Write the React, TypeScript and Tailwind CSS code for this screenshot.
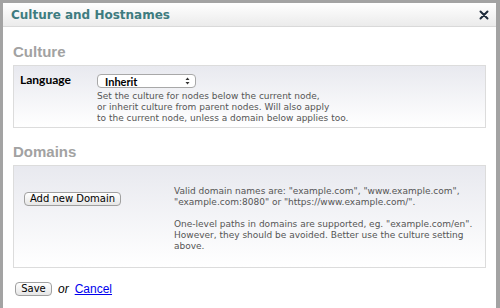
import React from "react";

const font = { fontFamily: '"DejaVu Sans", "Liberation Sans", sans-serif' };
const head = { fontFamily: '"Liberation Sans", Arial, sans-serif' };
const lato = { fontFamily: 'Lato, "Liberation Sans", sans-serif' };

export default function App() {
  return (
    <div className="w-[500px] h-[308px] bg-[#a3a3a3] pt-[3px] pl-[3px] pr-[4px] overflow-hidden" style={font}>
      <div className="h-full bg-white flex flex-col">
        <div className="h-[24px] flex items-center justify-between pl-[8px] pr-[7px] border-b border-[#d9d9d9] bg-gradient-to-b from-[#ffffff] to-[#ebebeb]">
          <span className="text-[12px] font-bold text-[#3e7c80]">Culture and Hostnames</span>
          <svg width="10" height="10" viewBox="0 0 10 10">
            <path d="M1.5 1.5 L8.5 8.5 M8.5 1.5 L1.5 8.5" stroke="#1d2a3a" strokeWidth="2" strokeLinecap="round" />
          </svg>
        </div>
        <div className="px-[10px] flex flex-col">
          <div className="mt-[15px] h-[20px] flex items-center text-[15px] font-bold text-[#a2a2a2]" style={head}>Culture</div>
          <div className="mt-[3px] border border-[#dcdcdc] bg-gradient-to-b from-[#e8e9ef] to-[#ffffff] flex h-[63px]">
            <div className="w-[83px] pl-[6px] pt-[5px] text-[12px] font-bold text-black" style={lato}>Language</div>
            <div className="flex flex-col pt-[8px]">
              <div className="w-[99px] h-[14px] rounded-[4px] border border-[#a8a8a8] bg-white flex items-center justify-between pl-[7px] pr-[5px]">
                <span className="text-[11px] font-bold text-black leading-none" style={lato}>Inherit</span>
                <svg width="5" height="8" viewBox="0 0 5 8">
                  <path d="M0.5 3 L2.5 0.5 L4.5 3 Z M0.5 5 L2.5 7.5 L4.5 5 Z" fill="#333" />
                </svg>
              </div>
              <div className="mt-[3px] text-[9px] leading-[11px] text-[#555]">
                Set the culture for nodes below the current node,<br />
                or inherit culture from parent nodes. Will also apply<br />
                to the current node, unless a domain below applies too.
              </div>
            </div>
          </div>
          <div className="mt-[14px] h-[20px] flex items-center text-[15px] font-bold text-[#a2a2a2]" style={head}>Domains</div>
          <div className="mt-[3px] border border-[#dcdcdc] bg-gradient-to-b from-[#e8e9ef] to-[#ffffff] flex h-[103px]">
            <div className="w-[160px] pl-[10px] pt-[19px]">
              <button className="w-[97px] h-[14px] rounded-[4px] border border-[#a0a0a0] bg-gradient-to-b from-white to-[#e6e6e6] text-[10px] leading-none text-black">Add new Domain</button>
            </div>
            <div className="pt-[20px] text-[9px] leading-[11px] text-[#555]">
              <div>
                Valid domain names are: "example.com", "www.example.com",<br />
                "example.com:8080" or "https://www.example.com/".
              </div>
              <div className="mt-[11px]">
                One-level paths in domains are supported, eg. "example.com/en".<br />
                However, they should be avoided. Better use the culture setting<br />
                above.
              </div>
            </div>
          </div>
          <div className="mt-[12px] flex items-center gap-[6px] pl-[2px]">
            <button className="w-[37px] h-[14px] rounded-[4px] border border-[#a0a0a0] bg-gradient-to-b from-white to-[#e6e6e6] text-[10px] leading-none text-black">Save</button>
            <span className="text-[12px] italic text-black" style={head}>or</span>
            <a href="#" className="text-[12px] text-[#0000ee] underline" style={head}>Cancel</a>
          </div>
        </div>
      </div>
    </div>
  );
}
